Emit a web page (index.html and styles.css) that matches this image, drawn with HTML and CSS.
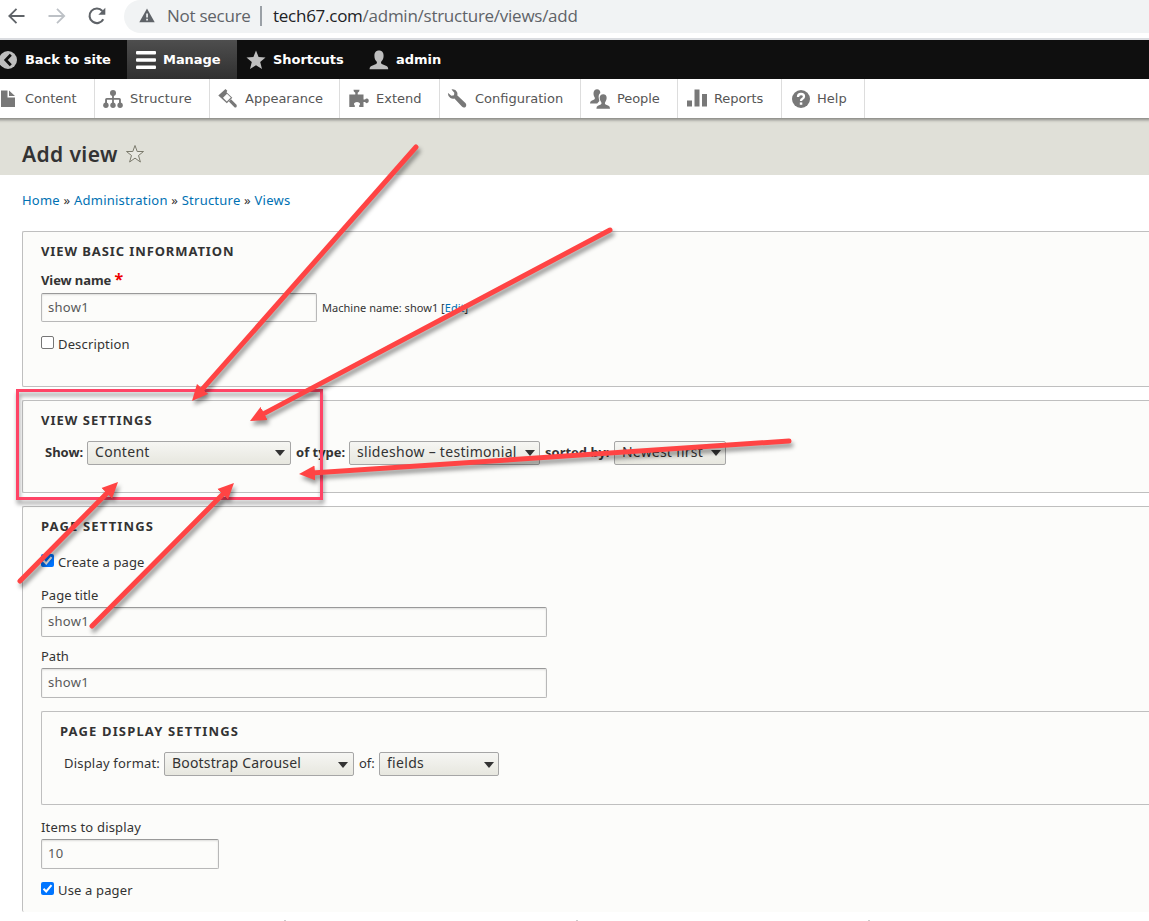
FILE: index.html
```html
<!DOCTYPE html>
<html lang="en">
<head>
    <meta charset="UTF-8">
    <meta name="viewport" content="width=device-width, initial-scale=1.0">
    <title>Add view | tech67.com</title>
    <link rel="stylesheet" href="styles.css">
</head>
<body>
    <!-- Browser address bar -->
    <div class="browser-bar">
        <div class="browser-nav">
            <svg width="20" height="20" viewBox="0 0 20 20" fill="none" stroke="#5f6368" stroke-width="1.8"><path d="M17.500 10H2.500M9.500 2.800 2.300 10l7.200 7.200"/></svg>
            <svg width="20" height="20" viewBox="0 0 20 20" fill="none" stroke="#bdc1c6" stroke-width="1.8"><path d="M1.500 10H17M10 2.800l7.200 7.200-7.200 7.200"/></svg>
            <svg width="20" height="20" viewBox="0 0 20 20" fill="none" stroke="#5f6368" stroke-width="2.1"><path d="M16.300 13.200A7.300 7.300 0 1 1 15.400 5"/><path d="M18.300 1.800v7h-7z" fill="#5f6368" stroke="none"/></svg>
        </div>
        <div class="address">
            <svg width="16" height="15" viewBox="0 0 16 15"><path d="M8 .5 15.700 14.200H.3z" fill="#5f6368"/><path d="M7.200 5.500h1.700v4H7.200zM7.200 10.800h1.700v1.700H7.200z" fill="#f1f3f4"/></svg>
            <span class="not-secure">Not secure</span>
            <span class="divider"></span>
            <span class="url"><b>tech67.com</b>/admin/structure/views/add</span>
        </div>
    </div>

    <!-- Admin toolbar -->
    <nav class="toolbar-bar">
        <a class="tab">
            <svg width="20" height="20" viewBox="0 0 20 20"><circle cx="8" cy="10" r="9" fill="#bebebe"/><path d="M10.800 4.800 5.800 10l5 5.200" fill="none" stroke="#0f0f0f" stroke-width="2.8"/></svg>
            <span>Back to site</span>
        </a>
        <a class="tab active">
            <svg width="20" height="20" viewBox="0 0 20 20" fill="#fff"><rect y="1" width="20" height="3.6" rx="1"/><rect y="8.2" width="20" height="3.6" rx="1"/><rect y="15.4" width="20" height="3.6" rx="1"/></svg>
            <span>Manage</span>
        </a>
        <a class="tab">
            <svg width="20" height="20" viewBox="0 0 20 20" fill="#bebebe"><path d="M10 .4l2.600 6.600 6.900.4-5.300 4.500 1.800 7.200-6-3.900-6 3.900 1.800-7.200L.5 7.400l6.900-.4z"/></svg>
            <span>Shortcuts</span>
        </a>
        <a class="tab">
            <svg width="20" height="20" viewBox="0 0 20 20" fill="#bebebe"><path d="M10 .5c3.200 0 4.600 2.200 4.600 5.200 0 2.300-.8 4.200-2.100 5.500-.8.900-.5 2.300.3 2.700l4.700 2c1.100.5 1.700 1.400 1.700 3.400H.6c0-2 .6-2.900 1.800-3.400l4.700-2c.9-.4 1.200-1.800.3-2.700-1.300-1.300-2-3.200-2-5.500C5.400 2.700 6.800.5 10 .5z"/></svg>
            <span>admin</span>
        </a>
    </nav>
    <nav class="toolbar-tray">
        <a class="item">
            <svg width="20" height="20" viewBox="0 0 20 20" fill="#787878"><path d="M3 1.500h6.500v7H17v9.500H3zM11 1.500l6 5.500h-6z"/></svg>
            <span>Content</span>
        </a>
        <a class="item">
            <svg width="20" height="20" viewBox="0 0 20 20" fill="#787878"><circle cx="10" cy="4" r="3"/><path d="M9.100 6h1.800v3h5.400q1.600 0 1.600 1.600V15H16v-4.200h-5.100V15H9.100v-4.200H4V15H2.100v-4.400Q2.100 9 3.700 9h5.400z"/><circle cx="2.9" cy="16.3" r="2.7"/><circle cx="10" cy="16.3" r="2.7"/><circle cx="17.100" cy="16.3" r="2.7"/></svg>
            <span class="t-structure">Structure</span>
        </a>
        <a class="item">
            <svg width="20" height="20" viewBox="0 0 20 20" fill="#787878"><path d="M7.500 0 9.300 1.800 8.500 3.200l5.800 5.600-5.500 5.400L.3 6.500z"/><path d="M5 8.800 9 4.800l3.800 3.800-4 4z" fill="#fff"/><path d="M13 10.300l5.500 5.500q.8 1.500-.2 2.400-1.100.7-2.100-.3l-5.300-5.500z"/></svg>
            <span>Appearance</span>
        </a>
        <a class="item extend">
            <svg width="20" height="20" viewBox="0 0 20 20" fill="#787878"><path d="M.3 5.500h6V3.800Q4.300 3 4.500.8H10.500Q10.700 3 8.700 3.800v1.700h5.800v5h1.500q1-1.400 2.200-1 1.600.5 1.600 2.300t-1.600 2.300q-1.200.4-2.200-1h-1.500v5h-4.300v-1.500q1.100-.8.800-2-.6-1.600-3-1.600t-3 1.600q-.3 1.200.8 2v1.500H.3z"/></svg>
            <span>Extend</span>
        </a>
        <a class="item config">
            <svg width="20" height="20" viewBox="0 0 20 20" fill="#787878"><path d="M4.500.5Q8.500-.2 10 3q.8 1.700.2 3.200l8.200 7.800q1.600 2 .2 3.900-1.900 1.300-3.700-.4L7.400 9.500Q5.500 10.100 3.400 9.100.6 7.500 1 4l3.400 2.800L7 6.300l.3-2.600z"/></svg>
            <span>Configuration</span>
        </a>
        <a class="item people">
            <svg width="20" height="20" viewBox="0 0 20 20" fill="#787878"><path d="M7 .3c2.200 0 3.300 1.300 3.300 3.600-1.500 1.200-1.900 3-1.500 5.300l.6 2.800-2.200 2.500H0q0-2.300 1.500-2.800l2.700-1.200c.9-.5.800-1.700.2-2.400C2.800 5 3.300.3 7 .3z"/><path d="M13.200 5.300c4.200 0 4.200 5 2.100 7.700-.6.800-.5 2.100.3 2.500l2.900 1.200q1.500.6 1.500 3.100H6.400q0-2.500 1.500-3.100l2.900-1.200c.8-.4.900-1.700.3-2.500-2.100-2.700-2.100-7.700 2.100-7.700z"/></svg>
            <span>People</span>
        </a>
        <a class="item reports">
            <svg width="20" height="20" viewBox="0 0 20 20" fill="#787878"><path d="M0 11.500h5v6H0zM7.500.5h5v17h-5zM15 5h5v12.500h-5z"/></svg>
            <span>Reports</span>
        </a>
        <a class="item help">
            <svg width="20" height="20" viewBox="0 0 20 20"><circle cx="10" cy="10" r="9" fill="#787878"/><path d="M7 8q0-3 3-3t3 2.600q0 1.400-1.500 2.200T10 12" fill="none" stroke="#fff" stroke-width="2.3"/><path d="M8.800 13.400h2.500v2.400H8.800z" fill="#fff"/></svg>
            <span>Help</span>
        </a>
    </nav>

    <header class="page-header">
        <h1>Add view</h1>
        <svg width="20" height="20" viewBox="0 0 20 20" fill="#e9e9e2" stroke="#7b7a6c"><path d="M10 1.500l2.200 6h6.300l-5 4 1.900 6.500-5.400-3.900L4.600 18l1.900-6.500-5-4h6.300z"/></svg>
    </header>

    <main class="page-content">
        <div class="breadcrumb"><a>Home</a> » <a>Administration</a> » <a>Structure</a> » <a>Views</a></div>

        <section class="fieldset basic">
            <h2>View basic information</h2>
            <label class="field-label strong">View name <span class="required">*</span></label>
            <div class="name-row">
                <div class="text-input name">show1</div>
                <span class="machine">Machine name: show1 [<a>Edit</a>]</span>
            </div>
            <div class="check-row">
                <span class="checkbox"></span>
                <span class="check-label">Description</span>
            </div>
        </section>

        <section class="fieldset view-settings">
            <h2>View settings</h2>
            <div class="select-row strong">
                <span class="l-show">Show:</span>
                <div class="select show"><span>Content</span></div>
                <span class="l-type">of type:</span>
                <div class="select type"><span>slideshow – testimonial</span></div>
                <span class="l-sorted">sorted by:</span>
                <div class="select sorted"><span>Newest first</span></div>
            </div>
        </section>

        <section class="fieldset page-settings">
            <h2>Page settings</h2>
            <div class="check-row">
                <span class="checkbox checked"><svg width="13" height="13" viewBox="0 0 13 13"><path d="M2.500 6.800 5.200 9.500l5.300-6.300" fill="none" stroke="#fff" stroke-width="2"/></svg></span>
                <span class="check-label">Create a page</span>
            </div>
            <label class="field-label">Page title</label>
            <div class="text-input">show1</div>
            <label class="field-label">Path</label>
            <div class="text-input">show1</div>

            <section class="fieldset display">
                <h2>Page display settings</h2>
                <div class="select-row">
                    <span class="l-format">Display format:</span>
                    <div class="select format"><span>Bootstrap Carousel</span></div>
                    <span class="l-of">of:</span>
                    <div class="select fields"><span>fields</span></div>
                </div>
            </section>

            <label class="field-label items">Items to display</label>
            <div class="text-input number">10</div>
            <div class="check-row pager">
                <span class="checkbox checked"><svg width="13" height="13" viewBox="0 0 13 13"><path d="M2.500 6.800 5.200 9.500l5.300-6.300" fill="none" stroke="#fff" stroke-width="2"/></svg></span>
                <span class="check-label">Use a pager</span>
            </div>
        </section>
    </main>

    <!-- Specks along the bottom edge -->
    <footer class="specks"><i></i><i></i><i></i></footer>

    <!-- Highlight box and arrows drawn over the page -->
    <svg class="annotations" width="1149" height="921" viewBox="0 0 1149 921">
        <defs>
            <marker id="head" markerUnits="userSpaceOnUse" markerWidth="18" markerHeight="16" refX="3" refY="8" orient="auto">
                <path d="M0 0.500 16 8 0 15.500z" fill="#ff4444"/>
            </marker>
        </defs>
        <rect class="highlight" x="17.5" y="390.5" width="304" height="108"/>
        <g class="arrows" marker-end="url(#head)">
            <path d="M416 147 200.600 391.200"/>
            <path d="M610 230 261.500 414.900"/>
            <path d="M789 441 312 473.100"/>
            <path d="M20 581 108.900 491.200"/>
            <path d="M92 626 224.800 492.200"/>
        </g>
    </svg>
</body>
</html>
```
FILE: styles.css
```css
* {
    box-sizing: border-box;
}

body {
    margin: 0;
    height: 921px;
    overflow: hidden;
    background-color: #fff;
    color: #333;
    font-family: "Noto Sans", "Open Sans", sans-serif;
    font-size: 13px;
    white-space: nowrap;
}

svg {
    display: block;
    flex: none;
}

a {
    color: #0071b3;
}

/* Browser bar */
.browser-bar {
    display: flex;
    height: 40px;
    border-bottom: 2px solid #dadce0;
}

.browser-nav {
    display: flex;
    gap: 20px;
    width: 124px;
    padding: 6px 0 0 7px;
}

.address {
    display: flex;
    flex: 1;
    align-items: center;
    height: 33px;
    padding: 0 0 2px 15px;
    background-color: #f1f3f4;
    border-radius: 17px 0 0 17px;
    color: #5f6368;
    font-family: "Open Sans", sans-serif;
    font-size: 17px;
    letter-spacing: -0.26px;
}

.not-secure {
    width: 84px;
    margin-left: 12px;
}

.divider {
    width: 2px;
    height: 20px;
    margin: 0 11px 0 9px;
    background-color: #9aa0a6;
}

.url b {
    color: #202124;
    font-weight: normal;
}

/* Toolbar */
.toolbar-bar,
.toolbar-tray {
    display: grid;
    height: 39px;
    margin-left: -10px;
    font-family: "DejaVu Sans", sans-serif;
}

.toolbar-bar {
    grid-template-columns: 137px 110px 123px 1fr;
    background-color: #0f0f0f;
}

.tab {
    display: flex;
    align-items: center;
    gap: 7px;
    padding-left: 9px;
    color: #fff;
    font-weight: bold;
    letter-spacing: -0.05px;
}

.tab:first-child {
    padding-left: 10px;
    gap: 5px;
}

.tab.active {
    background: linear-gradient(#4e4e4e, #303030);
}

.toolbar-tray {
    position: relative;
    grid-template-columns: 105px 115px 130px 100px 141px 97px 104px 83px;
    background-color: #fff;
    box-shadow: 0 0 3px 2px rgba(0, 0, 0, 0.4);
    clip-path: inset(0 0 -8px 0);
}

.item {
    display: flex;
    align-items: center;
    gap: 7px;
    padding-left: 8px;
    border-right: 1px solid #ddd;
    color: #565656;
}

.item.extend,
.item.people,
.item.reports {
    padding-left: 9px;
}

.item.people,
.item.reports {
    letter-spacing: -0.1px;
}

.item.config {
    padding-left: 7px;
    gap: 8px;
}

.item.help {
    padding-left: 9px;
    gap: 6px;
}

.t-structure {
    letter-spacing: 0.15px;
}

/* Page header */
.page-header {
    display: flex;
    align-items: center;
    gap: 7px;
    height: 57px;
    padding: 14px 0 0 22px;
    background-color: #e0e0d8;
}

h1 {
    margin: 0;
    font-size: 21px;
    font-weight: 600;
    letter-spacing: 0.4px;
}

.page-content {
    padding-left: 22px;
}

.breadcrumb {
    height: 56px;
    padding-top: 16px;
    line-height: 18px;
    letter-spacing: 0.23px;
}

/* Fieldsets */
.fieldset {
    padding: 10px 0 0 18px;
    border: 1px solid #bfbfbf;
    border-right: none;
    border-radius: 2px 0 0 2px;
    background-color: #fcfcfa;
}

.basic {
    height: 156px;
    margin-bottom: 13px;
}

.view-settings {
    height: 93px;
    margin-bottom: 13px;
}

.page-settings {
    height: 406px;
    border-bottom: none;
}

.display {
    height: 94px;
    margin-top: 13px;
}

h2 {
    margin: 0;
    font-size: 13px;
    font-weight: 700;
    line-height: 18px;
    letter-spacing: 1.15px;
    text-transform: uppercase;
}

.basic h2 {
    letter-spacing: 0.9px;
}

.view-settings h2 {
    letter-spacing: 1px;
}

.field-label {
    display: block;
    height: 31px;
    padding-top: 10px;
    line-height: 18px;
}

.basic .field-label {
    height: 33px;
    padding-top: 11px;
    letter-spacing: -0.1px;
}

.field-label.items {
    height: 34px;
    padding-top: 13px;
    letter-spacing: 0.2px;
}

.strong {
    font-weight: 700;
}

.required {
    color: #e00;
    font-size: 16px;
    line-height: 1;
}

.name-row {
    display: flex;
    align-items: center;
    gap: 5px;
}

.text-input {
    width: 506px;
    height: 30px;
    padding-left: 6px;
    border: 1px solid #b8b8b8;
    border-top-color: #999;
    border-radius: 2px;
    box-shadow: inset 0 1px 2px rgba(0, 0, 0, 0.125);
    color: #595959;
    line-height: 27px;
    letter-spacing: 0.3px;
}

.text-input.name {
    width: 276px;
    height: 29px;
}

.text-input.number {
    width: 178px;
}

.machine {
    font-size: 11px;
    letter-spacing: 0.03px;
}

.check-row {
    display: flex;
    gap: 4px;
    padding-top: 14px;
    line-height: 16px;
}

.page-settings .check-row {
    height: 41px;
    padding-top: 19px;
}

.page-settings .check-row.pager {
    padding-top: 13px;
}

.check-label {
    letter-spacing: 0.15px;
}

.checkbox {
    width: 13px;
    height: 13px;
    border: 1px solid #767676;
    border-radius: 2px;
    background-color: #fff;
}

.checkbox.checked {
    border: none;
    background-color: #0075ff;
}

/* Selects */
.select-row {
    display: flex;
    align-items: center;
    height: 24px;
    margin-top: 12px;
    padding-left: 4px;
    line-height: 18px;
}

.select-row > span {
    padding-bottom: 2px;
}

.select {
    display: flex;
    align-items: center;
    justify-content: space-between;
    height: 24px;
    margin-right: 5px;
    padding: 0 5px 3px 7px;
    border: 1px solid #a6a6a6;
    border-radius: 2px;
    background: linear-gradient(#f6f6f3, #e7e7df);
    font-size: 14px;
    font-weight: 400;
    letter-spacing: 0.3px;
}

.select::after {
    content: "";
    margin-top: 3px;
    border: 5px solid transparent;
    border-top: 6px solid #333;
    border-bottom: none;
}

.display .select::after {
    margin-top: 5px;
}

.select.show { width: 204px; }
.select.type { width: 191px; padding-right: 4px; }
.select.sorted { width: 112px; padding-right: 4px; letter-spacing: 0.2px; }
.select.format { width: 190px; letter-spacing: 0.17px; }
.select.fields { width: 120px; padding-right: 4px; }

.l-show { width: 42px; }
.l-type { width: 53px; }
.l-sorted { width: 69px; }
.l-format { width: 100px; letter-spacing: 0.2px; }
.l-of { width: 20px; }

.specks {
    display: flex;
    gap: 290px;
    padding: 8px 0 0 284px;
}

.specks i {
    width: 2px;
    height: 1px;
    background-color: #ccc;
}

/* Overlay */
.annotations {
    position: absolute;
    top: 0;
    left: 0;
}

.highlight {
    fill: none;
    stroke: #ff4466;
    stroke-width: 3;
    filter: drop-shadow(1px 4px 2px rgba(0, 0, 0, 0.4));
}

.arrows {
    fill: none;
    stroke: #ff4444;
    stroke-width: 5;
    stroke-linecap: round;
    filter: drop-shadow(2px 4px 2px rgba(0, 0, 0, 0.4));
}

#head path {
    stroke: none;
}
```
